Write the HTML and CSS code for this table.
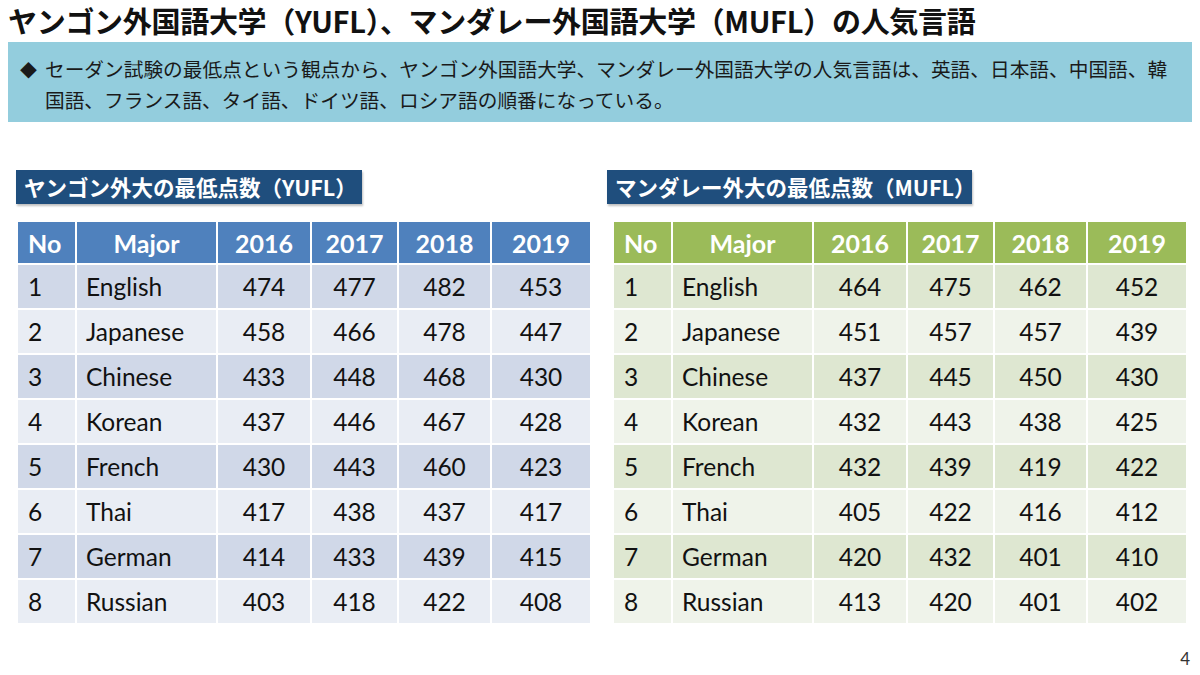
FILE: index.html
```html
<!DOCTYPE html>
<html lang="ja">
<head>
<meta charset="utf-8">
<title>ヤンゴン外国語大学・マンダレー外国語大学の人気言語</title>
<link rel="stylesheet" href="styles.css">
</head>
<body>
<div class="slide">
  <h1 class="title">ヤンゴン外国語大学（YUFL）、マンダレー外国語大学（MUFL）の人気言語</h1>
  <div class="summary">
    <p class="line1"><span class="bullet">◆</span>セーダン試験の最低点という観点から、ヤンゴン外国語大学、マンダレー外国語大学の人気言語は、英語、日本語、中国語、韓</p>
    <p class="line2">国語、フランス語、タイ語、ドイツ語、ロシア語の順番になっている。</p>
  </div>
  <div class="columns">
    <section class="col col-left">
      <div class="label">ヤンゴン外大の最低点数（YUFL）</div>
      <table class="scores blue">
        <thead>
          <tr><th class="no">No</th><th class="major">Major</th><th class="y16">2016</th><th class="y17">2017</th><th class="y18">2018</th><th class="y19">2019</th></tr>
        </thead>
        <tbody>
          <tr><td class="no">1</td><td class="major">English</td><td>474</td><td>477</td><td>482</td><td>453</td></tr>
          <tr><td class="no">2</td><td class="major">Japanese</td><td>458</td><td>466</td><td>478</td><td>447</td></tr>
          <tr><td class="no">3</td><td class="major">Chinese</td><td>433</td><td>448</td><td>468</td><td>430</td></tr>
          <tr><td class="no">4</td><td class="major">Korean</td><td>437</td><td>446</td><td>467</td><td>428</td></tr>
          <tr><td class="no">5</td><td class="major">French</td><td>430</td><td>443</td><td>460</td><td>423</td></tr>
          <tr><td class="no">6</td><td class="major">Thai</td><td>417</td><td>438</td><td>437</td><td>417</td></tr>
          <tr><td class="no">7</td><td class="major">German</td><td>414</td><td>433</td><td>439</td><td>415</td></tr>
          <tr><td class="no">8</td><td class="major">Russian</td><td>403</td><td>418</td><td>422</td><td>408</td></tr>
        </tbody>
      </table>
    </section>
    <section class="col col-right">
      <div class="label">マンダレー外大の最低点数（MUFL）</div>
      <table class="scores green">
        <thead>
          <tr><th class="no">No</th><th class="major">Major</th><th class="y16">2016</th><th class="y17">2017</th><th class="y18">2018</th><th class="y19">2019</th></tr>
        </thead>
        <tbody>
          <tr><td class="no">1</td><td class="major">English</td><td>464</td><td>475</td><td>462</td><td>452</td></tr>
          <tr><td class="no">2</td><td class="major">Japanese</td><td>451</td><td>457</td><td>457</td><td>439</td></tr>
          <tr><td class="no">3</td><td class="major">Chinese</td><td>437</td><td>445</td><td>450</td><td>430</td></tr>
          <tr><td class="no">4</td><td class="major">Korean</td><td>432</td><td>443</td><td>438</td><td>425</td></tr>
          <tr><td class="no">5</td><td class="major">French</td><td>432</td><td>439</td><td>419</td><td>422</td></tr>
          <tr><td class="no">6</td><td class="major">Thai</td><td>405</td><td>422</td><td>416</td><td>412</td></tr>
          <tr><td class="no">7</td><td class="major">German</td><td>420</td><td>432</td><td>401</td><td>410</td></tr>
          <tr><td class="no">8</td><td class="major">Russian</td><td>413</td><td>420</td><td>401</td><td>402</td></tr>
        </tbody>
      </table>
    </section>
  </div>
  <div class="page-no">4</div>
</div>
</body>
</html>
```
FILE: styles.css
```css
* { box-sizing: border-box; }
html, body { margin: 0; padding: 0; background: #ffffff; }
body {
  width: 1200px;
  height: 675px;
  overflow: hidden;
  font-family: "Noto Sans CJK JP", "Noto Sans", sans-serif;
  color: #1a1a1a;
}
.slide {
  width: 1200px;
  height: 675px;
  padding: 0 8px 0 8px;
  display: flex;
  flex-direction: column;
}
.title {
  margin: 0;
  height: 42px;
  font-size: 29px;
  line-height: 40px;
  font-weight: 700;
  color: #111;
  white-space: nowrap;
  letter-spacing: -0.3px;
}
.summary {
  height: 80px;
  background: #93cddd;
  padding: 12px 10px 0 12px;
  font-size: 19.7px;
  line-height: 30px;
  color: #1a1a1a;
}
.summary p { margin: 0; white-space: nowrap; }
.summary .bullet { display: inline-block; width: 25px; font-size: 17px; }
.summary .line2 { padding-left: 25px; }
.columns {
  display: flex;
  margin-top: 48px;
  padding-left: 8px;
}
.col-left { width: 574px; }
.col-right { margin-left: 17px; width: 577px; }
.label {
  display: inline-block;
  height: 34px;
  background: #1f4e7d;
  color: #ffffff;
  font-weight: 700;
  font-size: 21.5px;
  line-height: 34px;
  padding: 0 8px 0 8px;
  white-space: nowrap;
  box-shadow: 1px 2px 2px rgba(0,0,0,0.25);
}
.col-left .label { width: 346px; }
.col-right .label { width: 365px; }
.scores {
  margin-top: 16px;
  border-collapse: collapse;
  font-family: "Lato", "Open Sans", sans-serif;
  table-layout: fixed;
}
.col-right .scores { margin-left: 5px; width: 572px; }
.col-left .scores { width: 574px; }
.scores th, .scores td {
  border: 2px solid #ffffff;
  padding: 0;
  text-align: center;
  white-space: nowrap;
}
.scores th {
  height: 43px;
  font-size: 25px;
  font-weight: 700;
  color: #ffffff;
}
.scores td {
  height: 45px;
  font-size: 24.5px;
  color: #111;
}
.scores .no { text-align: left; padding-left: 10px; width: 59px; }
.scores td.major { text-align: left; padding-left: 9px; width: 141px; }
.scores th.major { width: 141px; }
.scores .y16 { width: 94px; }
.scores .y17 { width: 87px; }
.scores .y18 { width: 93px; }
.scores .y19 { width: 100px; }
.blue thead th { background: #4f81bd; }
.blue tbody tr:nth-child(odd) td { background: #d0d8e8; }
.blue tbody tr:nth-child(even) td { background: #e9edf4; }
.green thead th { background: #9bbb59; }
.green tbody tr:nth-child(odd) td { background: #dee7d1; }
.green tbody tr:nth-child(even) td { background: #eff3ea; }
.page-no {
  margin-top: auto;
  margin-bottom: 6px;
  align-self: flex-end;
  padding-right: 2px;
  font-family: "Lato", "Open Sans", sans-serif;
  font-size: 17px;
  color: #333;
}
```
